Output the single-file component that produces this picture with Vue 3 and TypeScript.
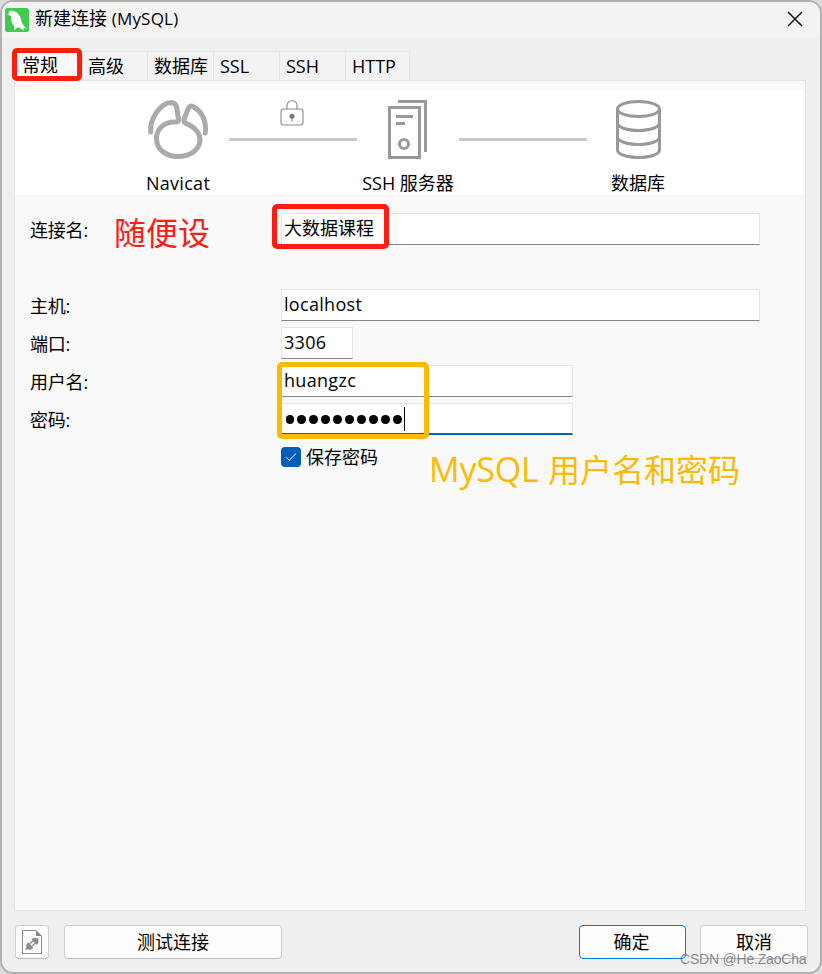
<script setup lang="ts">
import { ref } from 'vue'

interface Tab {
  label: string
  width: number
}

const tabs: Tab[] = [
  { label: '常规', width: 69 },
  { label: '高级', width: 65 },
  { label: '数据库', width: 66 },
  { label: 'SSL', width: 66 },
  { label: 'SSH', width: 66 },
  { label: 'HTTP', width: 64 },
]
const active = ref('常规')

const connectionName = ref('大数据课程')
const host = ref('localhost')
const port = ref('3306')
const user = ref('huangzc')
const passwordLength = ref(10)
const savePassword = ref(true)
</script>

<template>
  <div class="desktop">
    <div class="window">
      <header class="titlebar">
        <svg class="logo" viewBox="0 0 24 24">
          <rect width="24" height="24" rx="2.5" fill="#3fcb4b" />
          <path
            d="M3.500 3.200C6 2.200 9.500 2.600 11.500 4.300C14.500 6.800 16 9.500 16.600 13.500C17.200 16.500 19 18.500 22 20.300L18.300 20L18.800 22.800C17 21.200 15 19.800 12.500 19.200L9.300 22.500L9 18.200C6.500 15.500 5.700 12 6 8L2 6.300L4.500 5.200Z"
            fill="#fff"
          />
        </svg>
        <span class="title">新建连接 <span class="title-type">(MySQL)</span></span>
        <svg class="close" viewBox="0 0 16 16"><path d="M1 1L15 15M15 1L1 15" /></svg>
      </header>

      <nav class="tabs">
        <button
          v-for="tab in tabs"
          :key="tab.label"
          class="tab"
          :class="{ active: tab.label === active }"
          :style="{ width: tab.width + 'px' }"
          @click="active = tab.label"
        >{{ tab.label }}</button>
      </nav>

      <main class="panel">
        <section class="route">
          <div class="node">
            <svg width="62" height="60" viewBox="-.5 0 62 60" class="ic-navicat">
              <path d="M3.200 32C2 19 13 2.500 24 2.500C31.500 3 29 14 31 18C31.500 21 30.500 22 27 22C15.500 22 9 30 9 38.500C9 50 19 56.500 30 56.500C43 56.500 52.500 49 52.500 40C52.500 32 47.500 28 42 25C38 23 35.500 22.500 36.500 19L40 10.500C42 5.500 44 5 47 7.500C55 12 59 22 57.800 33" />
            </svg>
            <span class="node-label node-latin">Navicat</span>
          </div>
          <div class="link">
            <svg class="lock" width="24" height="26" viewBox="0 0 24 26">
              <rect x="1" y="9" width="22" height="16" rx="2.500" />
              <path d="M7 9V6C7 2.700 9.200 .8 12 .8S17 2.700 17 6V9M12 17V21.500" />
              <circle cx="12" cy="16.300" r="2.500" />
            </svg>
          </div>
          <div class="node">
            <svg width="40" height="60" viewBox="0 0 40 60" class="ic-server">
              <path d="M1.500 7.500H31.500V57.500H1.500ZM10 1.500H37.500V52M8 16.500H25M8 23.500H17" />
              <circle cx="16" cy="44" r="4.500" />
            </svg>
            <span class="node-label">SSH 服务器</span>
          </div>
          <div class="link"></div>
          <div class="node">
            <svg width="46" height="60" viewBox="0 0 46 60" class="ic-db">
              <ellipse cx="23.500" cy="9" rx="21" ry="7.500" />
              <path d="M2.500 9V50C2.500 54 11.500 57.500 23.500 57.500S44.500 54 44.500 50V9M2.500 23C2.500 27 11.500 30.500 23.500 30.500S44.500 27 44.500 23M2.500 37C2.500 41 11.500 44.500 23.500 44.500S44.500 41 44.500 37" />
            </svg>
            <span class="node-label">数据库</span>
          </div>
        </section>

        <form class="form" @submit.prevent>
          <div class="row row-name">
            <span class="label">连接名:</span>
            <div class="field wide">{{ connectionName }}</div>
          </div>
          <div class="row">
            <span class="label">主机:</span>
            <div class="field wide latin">{{ host }}</div>
          </div>
          <div class="row">
            <span class="label">端口:</span>
            <div class="field port latin">{{ port }}</div>
          </div>
          <div class="row">
            <span class="label">用户名:</span>
            <div class="field mid latin">{{ user }}</div>
          </div>
          <div class="row">
            <span class="label">密码:</span>
            <div class="field mid focused">
              <i v-for="n in passwordLength" :key="n" class="dot"></i><i class="caret"></i>
            </div>
          </div>
          <div class="save" @click="savePassword = !savePassword">
            <span class="check">
              <svg v-if="savePassword" width="12" height="10" viewBox="0 0 12 10"><path d="M1 5L4.200 8.300L11 1.500" /></svg>
            </span>
            <span>保存密码</span>
          </div>
        </form>
      </main>

      <footer class="actions">
        <button class="btn btn-icon">
          <svg width="20" height="24" viewBox="0 0 20 24">
            <path d="M14 .5H.5V23.500H19.500V6" fill="none" stroke="#8b8b8b" />
            <path d="M14 0L20 6H14Z" fill="#858585" />
            <g transform="translate(10 14) rotate(-42) scale(.92)" fill="#8a8a8a">
              <path d="M-9 -1H-7C-6.500 -3.500 -4.500 -4 -1.500 -4V4C-4.500 4 -6.500 3.500 -7 1H-9Z" />
              <path d="M9 -1H8C7.500 -3.500 5.500 -4 3 -4V-2.500H-1V-1H3V1H-1V2.500H3V4C5.500 4 7.500 3.500 8 1H9Z" />
            </g>
          </svg>
        </button>
        <button class="btn btn-test">测试连接</button>
        <button class="btn btn-ok">确定</button>
        <button class="btn btn-cancel">取消</button>
      </footer>
    </div>

    <div class="mark mark-tab"></div>
    <div class="mark mark-name"></div>
    <div class="mark mark-login"></div>
    <div class="note note-name">随便设</div>
    <div class="note note-login"><span class="note-latin">MySQL</span>用户名和密码</div>
    <div class="watermark">CSDN @He.ZaoCha</div>
  </div>
</template>

<style>
body {
  margin: 0;
  background: #dcdcdc;
  overflow: hidden;
}
</style>

<style scoped>
.desktop {
  position: relative;
  width: 822px;
  height: 974px;
  overflow: hidden;
  font-family: 'Open Sans', 'Noto Sans CJK SC', sans-serif;
  font-size: 18px;
  font-weight: 400;
  line-height: 24px;
  color: #000;
}
.window {
  box-sizing: border-box;
  height: 974px;
  display: flex;
  flex-direction: column;
  background: #efefef;
  border: 2px solid #b0b0b0;
  border-radius: 13px;
  overflow: hidden;
}
.titlebar {
  flex: none;
  height: 35px;
  display: flex;
  align-items: center;
  padding: 0 17px 0 3px;
  background: #f3f3f3;
}
.logo {
  width: 24px;
  height: 24px;
  margin-right: 6px;
}
.title {
  margin-top: -2px;
}
.title-type {
  font-size: 17px;
  letter-spacing: 0.2px;
}
.close {
  width: 16px;
  height: 16px;
  margin: -2px 0 0 auto;
}
.close path {
  stroke: #111;
  stroke-width: 1.5;
}
.tabs {
  flex: none;
  display: flex;
  height: 29px;
  margin: 14px 0 0 12px;
}
.tab {
  box-sizing: border-box;
  padding: 0 0 0 6px;
  text-align: left;
  font: inherit;
  line-height: 28px;
  color: inherit;
  white-space: nowrap;
  background: #f3f3f3;
  border: 1px solid #e5e5e5;
  border-width: 1px 1px 0 0;
}
.tab:nth-child(2) {
  padding-left: 5px;
}
.tab.active {
  padding: 0 0 2px 8px;
  line-height: 26px;
  background: #f9f9f9;
}
.panel {
  box-sizing: border-box;
  width: 792px;
  height: 831px;
  margin-left: 12px;
  padding-top: 9px;
  background: #f9f9f9;
  border: 1px solid #e5e5e5;
}
.route {
  box-sizing: border-box;
  height: 105px;
  display: flex;
  align-items: flex-start;
  padding: 10px 0 0 112px;
  background: #fff;
}
.node {
  display: flex;
  flex-direction: column;
  align-items: center;
  width: 102px;
}
.node-label {
  margin-top: 11px;
  white-space: nowrap;
}
.node-latin {
  letter-spacing: 0.3px;
}
.node svg,
.lock {
  display: block;
  fill: none;
}
.ic-navicat path {
  stroke: #aaa;
  stroke-width: 5;
  stroke-linecap: round;
  stroke-linejoin: round;
}
.ic-server,
.ic-db {
  stroke: #999;
  stroke-width: 3;
}
.link {
  box-sizing: border-box;
  width: 128px;
  height: 41px;
  border-bottom: 3px solid #c8c8c8;
}
.lock {
  margin-left: 51px;
  stroke: #888;
  stroke-width: 1.100;
}
.lock circle {
  fill: #777;
  stroke: none;
}
.form {
  padding: 18px 0 0 15px;
}
.row {
  display: flex;
  height: 32px;
  margin-bottom: 6px;
}
.row-name {
  margin-bottom: 44px;
}
.label {
  width: 251px;
  line-height: 34px;
  letter-spacing: -0.2px;
}
.field {
  box-sizing: border-box;
  padding-left: 2px;
  line-height: 29px;
  background: #fff;
  border: 1px solid #e5e5e5;
  border-bottom-color: #858585;
}
.latin {
  line-height: 28px;
  letter-spacing: 0.3px;
}
.wide {
  width: 479px;
}
.mid {
  width: 292px;
}
.port {
  width: 72px;
}
.focused {
  display: flex;
  align-items: center;
  padding-left: 3.5px;
  border-bottom: 2px solid #0067c0;
}
.dot {
  flex: none;
  width: 8.6px;
  height: 8.6px;
  margin-right: 3.4px;
  margin-top: 2px;
  border-radius: 50%;
  background: #000;
}
.caret {
  width: 1px;
  height: 24px;
  margin-left: -1.5px;
  background: #000;
}
.save {
  display: flex;
  align-items: center;
  gap: 5px;
  height: 24px;
  margin: 10px 0 0 251px;
}
.check {
  display: flex;
  align-items: center;
  justify-content: center;
  width: 20px;
  height: 20px;
  border-radius: 4px;
  background: #005fb8;
}
.check path {
  fill: none;
  stroke: #fff;
}
.actions {
  display: flex;
  padding: 14px 0 0 13px;
}
.btn {
  box-sizing: border-box;
  height: 34px;
  padding: 0;
  font: inherit;
  color: inherit;
  background: #fdfdfd;
  border: 1px solid #d0d0d0;
  border-bottom-color: #bababa;
  border-radius: 4px;
}
.btn-icon {
  display: flex;
  align-items: center;
  justify-content: center;
  width: 34px;
  margin-right: 15px;
}
.btn-test {
  width: 218px;
  margin-right: 297px;
}
.btn-ok {
  width: 107px;
  margin-right: 14px;
  padding-right: 2px;
  border-color: #0078d4;
}
.btn-cancel {
  width: 108px;
}
.mark {
  position: absolute;
  box-sizing: border-box;
  border: 5px solid #ff1d10;
  border-radius: 5px;
}
.mark-tab {
  left: 12px;
  top: 48px;
  width: 70px;
  height: 33px;
}
.mark-name {
  left: 272px;
  top: 204px;
  width: 117px;
  height: 45px;
}
.mark-login {
  left: 277px;
  top: 362px;
  width: 152px;
  height: 77px;
  border-color: #ffb900;
}
.note {
  position: absolute;
  font-size: 32px;
  line-height: 40px;
  white-space: nowrap;
}
.note-name {
  left: 114px;
  top: 213px;
  color: #ff1d10;
}
.note-login {
  left: 429px;
  top: 449px;
  color: #ffb900;
}
.note-latin {
  display: inline-block;
  width: 119px;
  font-size: 34px;
  letter-spacing: -0.2px;
}
.watermark {
  position: absolute;
  left: 680px;
  top: 949px;
  font: 14px/20px 'Liberation Sans', sans-serif;
  letter-spacing: -0.2px;
  color: rgba(110, 110, 110, 0.8);
  white-space: nowrap;
}
</style>
